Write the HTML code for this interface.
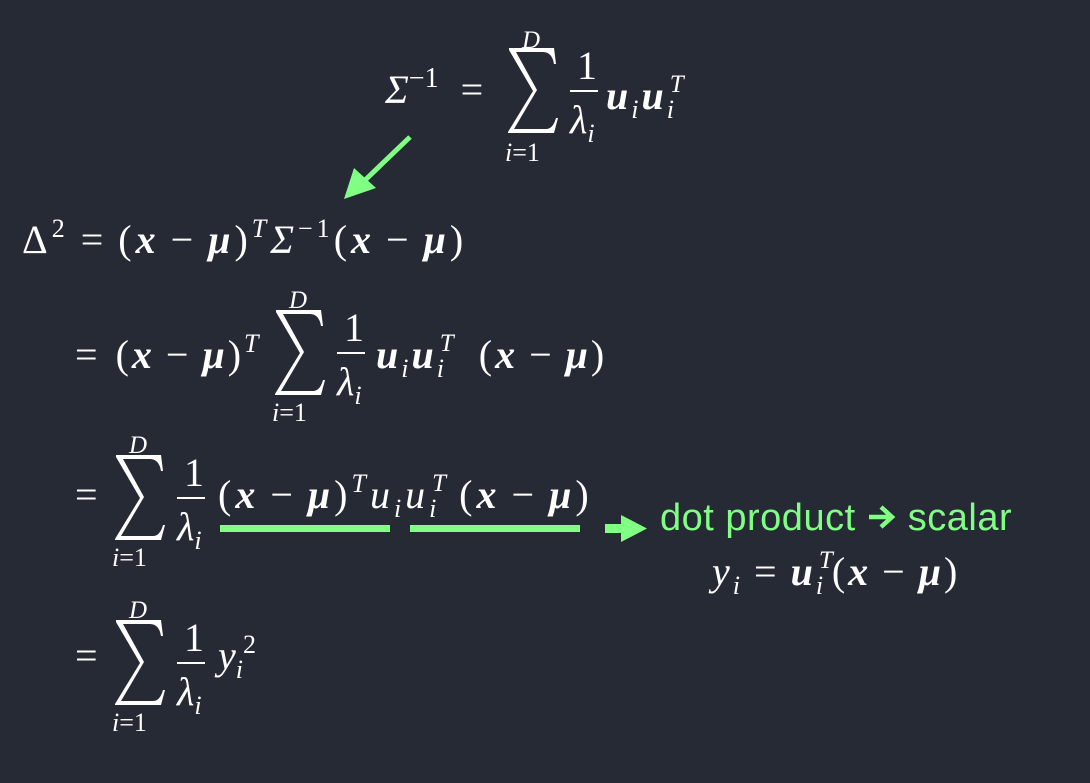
<!DOCTYPE html>
<html><head><meta charset="utf-8"><style>
body{margin:0;width:1090px;height:783px;background:#262a35;overflow:hidden;position:relative}
.t{position:absolute;white-space:nowrap;font-family:"Liberation Serif",serif;font-size:40px;line-height:1;color:#fff}
.w{letter-spacing:3px}
.w4{letter-spacing:4px}
.s{font-size:25px;font-style:italic}
.i{font-style:italic}
.b{font-weight:bold;font-style:italic}
.op{margin:0 11px}
.up{position:relative;top:-16px;font-size:26px}
.dn{position:relative;top:9px;font-size:26px;font-style:italic}
.st{position:relative;display:inline-block;width:16px}
.st .a{position:absolute;left:3px;top:-4px;font-size:25px;font-style:italic;line-height:1}
.st .z{position:relative;top:9px;font-size:26px;font-style:italic}
.bar{position:absolute;height:2px;background:#fff}
.g{position:absolute;background:#80ff84}
svg{position:absolute}
</style></head><body>

<svg width="0" height="0"><defs><path id="sum" d="M1,0 H46 L48,16 H46 Q44,4 35,4 H8 L29,42 L6,81 H38 Q45,81 48,70 H50 L46,85 H0 V84 L25,43 L1,2 Z" fill="#fff"/></defs></svg>

<!-- line 1 -->
<div class="t" style="left:385px;top:70px"><span class="i">Σ</span><span class="up" style="font-size:28px">−1</span><span class="op" style="margin-left:22px">=</span></div>
<svg style="left:508px;top:48px" width="52" height="86"><use href="#sum"/></svg>
<div class="t s" style="left:522px;top:28px">D</div>
<div class="t" style="left:505px;top:140px;font-size:26px"><i>i</i>=1</div>
<div class="t" style="left:577px;top:46px">1</div>
<div class="bar" style="left:570px;top:90px;width:28px"></div>
<div class="t i" style="left:570px;top:100px">λ<span class="dn">i</span></div>
<div class="t w" style="left:606px;top:76px"><span class="b">u</span><span class="dn">i</span><span class="b">u</span><span class="st"><span class="a">T</span><span class="z">i</span></span></div>

<!-- arrow -->
<svg style="left:330px;top:130px" width="90" height="75"><line x1="80" y1="7" x2="30" y2="55" stroke="#80ff84" stroke-width="5"/><polygon points="14,69 24,38 46,58" fill="#80ff84"/></svg>

<!-- line 2 -->
<div class="t w4" style="left:22px;top:220px">Δ<span class="up" style="font-size:26px">2</span><span class="op" style="margin-left:12px">=</span>(<span class="b">x</span><span class="op">−</span><span class="b">μ</span>)<span class="up i">T</span><span class="i">Σ</span><span class="up">−1</span>(<span class="b">x</span><span class="op">−</span><span class="b">μ</span>)</div>

<!-- line 3 -->
<div class="t w" style="left:75px;top:335px">=<span class="op" style="margin-right:4px"></span>(<span class="b">x</span><span class="op">−</span><span class="b">μ</span>)<span class="up i">T</span></div>
<svg style="left:275px;top:310px" width="52" height="86"><use href="#sum"/></svg>
<div class="t s" style="left:289px;top:288px">D</div>
<div class="t" style="left:272px;top:400px;font-size:26px"><i>i</i>=1</div>
<div class="t" style="left:344px;top:308px">1</div>
<div class="bar" style="left:337px;top:352px;width:28px"></div>
<div class="t i" style="left:337px;top:362px">λ<span class="dn">i</span></div>
<div class="t w" style="left:376px;top:335px"><span class="b">u</span><span class="dn">i</span><span class="b">u</span><span class="st"><span class="a">T</span><span class="z">i</span></span> &nbsp;(<span class="b">x</span><span class="op">−</span><span class="b">μ</span>)</div>

<!-- line 4 -->
<div class="t" style="left:75px;top:475px">=</div>
<svg style="left:115px;top:455px" width="52" height="86"><use href="#sum"/></svg>
<div class="t s" style="left:129px;top:433px">D</div>
<div class="t" style="left:112px;top:545px;font-size:26px"><i>i</i>=1</div>
<div class="t" style="left:184px;top:453px">1</div>
<div class="bar" style="left:177px;top:497px;width:28px"></div>
<div class="t i" style="left:177px;top:507px">λ<span class="dn">i</span></div>
<div class="t w4" style="left:218px;top:475px">(<span class="b">x</span><span class="op">−</span><span class="b">μ</span>)<span class="up i">T</span><span class="i">u</span><span class="dn">i</span><span class="i">u</span><span class="st"><span class="a">T</span><span class="z">i</span></span> (<span class="b">x</span><span class="op">−</span><span class="b">μ</span>)</div>
<div class="g" style="left:220px;top:525px;width:170px;height:7px"></div>
<div class="g" style="left:410px;top:525px;width:170px;height:7px"></div>
<svg style="left:603px;top:513px" width="45" height="32"><rect x="2" y="11" width="16" height="9" fill="#80ff84"/><polygon points="18,2 44,15.5 18,29" fill="#80ff84"/></svg>
<div class="t" style="left:660px;top:499px;font-family:'Liberation Sans',sans-serif;font-size:38px;color:#80ff84;letter-spacing:0.5px">dot product <svg style="position:relative;display:inline-block;vertical-align:middle;top:-3px" width="30" height="28"><path d="M2,14 H24 M14,4 L25,14 L14,24" stroke="#80ff84" stroke-width="4.5" fill="none"/></svg> scalar</div>
<div class="t w" style="left:712px;top:552px"><span class="i">y</span><span class="dn">i</span><span class="op">=</span><span class="b">u</span><span class="st"><span class="a">T</span><span class="z">i</span></span>(<span class="b">x</span><span class="op">−</span><span class="b">μ</span>)</div>

<!-- line 5 -->
<div class="t" style="left:75px;top:636px">=</div>
<svg style="left:115px;top:620px" width="52" height="86"><use href="#sum"/></svg>
<div class="t s" style="left:129px;top:598px">D</div>
<div class="t" style="left:112px;top:710px;font-size:26px"><i>i</i>=1</div>
<div class="t" style="left:184px;top:618px">1</div>
<div class="bar" style="left:177px;top:662px;width:28px"></div>
<div class="t i" style="left:177px;top:672px">λ<span class="dn">i</span></div>
<div class="t" style="left:218px;top:636px"><span class="i">y</span><span class="dn">i</span><span class="up">2</span></div>

</body></html>
